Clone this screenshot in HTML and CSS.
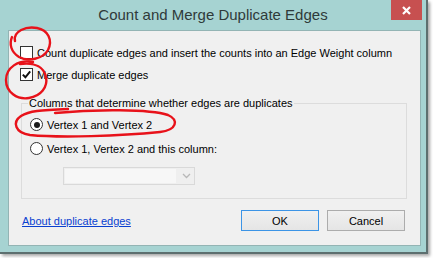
FILE: index.html
```html
<!DOCTYPE html>
<html>
<head>
<meta charset="utf-8">
<link rel="stylesheet" href="styles.css">
</head>
<body>
<div class="window">
  <div class="titlebar">
    <div class="title">Count and Merge Duplicate Edges</div>
    <div class="close"><svg width="9" height="9" viewBox="0 0 9 9"><path d="M1 1 L8 8 M8 1 L1 8" stroke="#fff" stroke-width="2.2" fill="none"/></svg></div>
  </div>
  <div class="client">
    <div class="check-row first"><span class="box"></span><span>Count duplicate edges and insert the counts into an Edge Weight column</span></div>
    <div class="check-row"><span class="box"><svg width="11" height="11" viewBox="0 0 11 11"><path d="M1.8 5.6 L4.4 8.3 L9.2 2.4" stroke="#111" stroke-width="2" fill="none"/></svg></span><span>Merge duplicate edges</span></div>
    <fieldset class="group">
      <legend>Columns that determine whether edges are duplicates</legend>
      <div class="radio-row first"><span class="radio on"></span><span>Vertex 1 and Vertex 2</span></div>
      <div class="radio-row"><span class="radio"></span><span>Vertex 1, Vertex 2 and this column:</span></div>
      <div class="combo"><span class="combo-field"></span><svg class="chev" width="9" height="6" viewBox="0 0 9 6"><path d="M1 1 L4.5 4.5 L8 1" stroke="#b8b8b8" stroke-width="1.3" fill="none"/></svg></div>
    </fieldset>
    <div class="footer">
      <a class="link" href="#">About duplicate edges</a>
      <div class="buttons">
        <button class="btn default">OK</button>
        <button class="btn">Cancel</button>
      </div>
    </div>
  </div>
  <svg class="marks" width="433" height="258" viewBox="0 0 433 258">
    <g fill="none" stroke="#e8121a" stroke-width="2.4" stroke-linecap="round">
      <path d="M15 41 C13 31 26 26 37 28 C48 30 53 40 48 50 C43 59 28 62 19 57 C11 52 9 44 12 37"/>
      <path d="M33 62 C18 59 6 68 6 80 C6 92 17 100 29 98 C41 96 48 87 46 77 C44 68 36 62 20 64"/>
      <path d="M55 113 C95 109 150 109 168 115 C179 120 177 130 160 132 C120 136 60 138 30 135 C15 133 12 122 21 116 C29 111 40 110 68 109"/>
    </g>
  </svg>
</div>
</body>
</html>
```

FILE: styles.css
```css
html, body {
  margin: 0;
  padding: 0;
}
body {
  width: 433px;
  height: 258px;
  overflow: hidden;
  background: #ffffff;
  font-family: "Liberation Sans", Arial, sans-serif;
  font-size: 11px;
  color: #000;
}
.window {
  position: relative;
  width: 426px;
  height: 252px;
  background: #a6d3d2;
  border-right: 2px solid #5d6f6f;
  border-bottom: 2px solid #5d6f6f;
  box-shadow: 2px 2px 3px rgba(0, 0, 0, 0.35);
  display: flex;
  flex-direction: column;
}
.titlebar {
  height: 30px;
  display: grid;
  grid-template-columns: 1fr auto 1fr;
  align-items: start;
}
.title {
  grid-column: 2;
  font-size: 15px;
  line-height: 30px;
  color: #2f3a3a;
  white-space: nowrap;
}
.close {
  grid-column: 3;
  justify-self: end;
  margin-right: 4px;
  width: 31px;
  height: 20px;
  background: #c75050;
  display: flex;
  align-items: center;
  justify-content: center;
}
.client {
  margin-left: 8px;
  width: 411px;
  height: 214px;
  border: 1px solid #93b4b4;
  background: #f0f0f0;
  display: flex;
  flex-direction: column;
}
.check-row {
  display: flex;
  align-items: center;
  gap: 4px;
  height: 13px;
  margin: 9px 0 0 11px;
  white-space: nowrap;
}
.check-row.first {
  margin-top: 15px;
}
.box {
  width: 13px;
  height: 13px;
  box-sizing: border-box;
  border: 1px solid #333;
  background: #fff;
  display: flex;
  align-items: center;
  justify-content: center;
}
.group {
  margin: 15px 0 0 12px;
  width: 386px;
  min-width: 0;
  box-sizing: border-box;
  border: 1px solid #dcdcdc;
  padding: 0 6px 13px 6px;
}
.group legend {
  padding: 0 1px;
  line-height: 14px;
}
.radio-row {
  display: flex;
  align-items: center;
  gap: 4px;
  height: 13px;
  margin: 11px 0 0 2px;
  white-space: nowrap;
}
.radio-row.first {
  margin-top: 8px;
}
.radio {
  width: 13px;
  height: 13px;
  box-sizing: border-box;
  border: 1px solid #333;
  border-radius: 50%;
  background: #fff;
  display: flex;
  align-items: center;
  justify-content: center;
}
.radio.on::after {
  content: "";
  width: 6px;
  height: 6px;
  border-radius: 50%;
  background: #1a1a1a;
}
.combo {
  margin: 12px 0 0 35px;
  width: 132px;
  height: 18px;
  box-sizing: border-box;
  border: 1px solid #d9d9d9;
  background: #efefef;
  display: flex;
  align-items: center;
  padding: 0 3px 0 1px;
  gap: 6px;
}
.combo-field {
  flex: 1;
  height: 14px;
  background: #f7f7f7;
}
.footer {
  margin: 11px 15px 0 13px;
  height: 21px;
  display: flex;
  align-items: center;
  justify-content: space-between;
}
.link {
  color: #0a3fd0;
  text-decoration: underline;
}
.buttons {
  display: flex;
  gap: 8px;
}
.btn {
  width: 78px;
  height: 21px;
  box-sizing: border-box;
  border: 1px solid #acacac;
  background: linear-gradient(#f0f0f0, #e5e5e5);
  font-family: "Liberation Sans", Arial, sans-serif;
  font-size: 11px;
  color: #000;
  padding: 0;
}
.btn.default {
  border-color: #3c94e6;
}
.marks {
  position: absolute;
  left: 0;
  top: 0;
  pointer-events: none;
  overflow: visible;
}
```
